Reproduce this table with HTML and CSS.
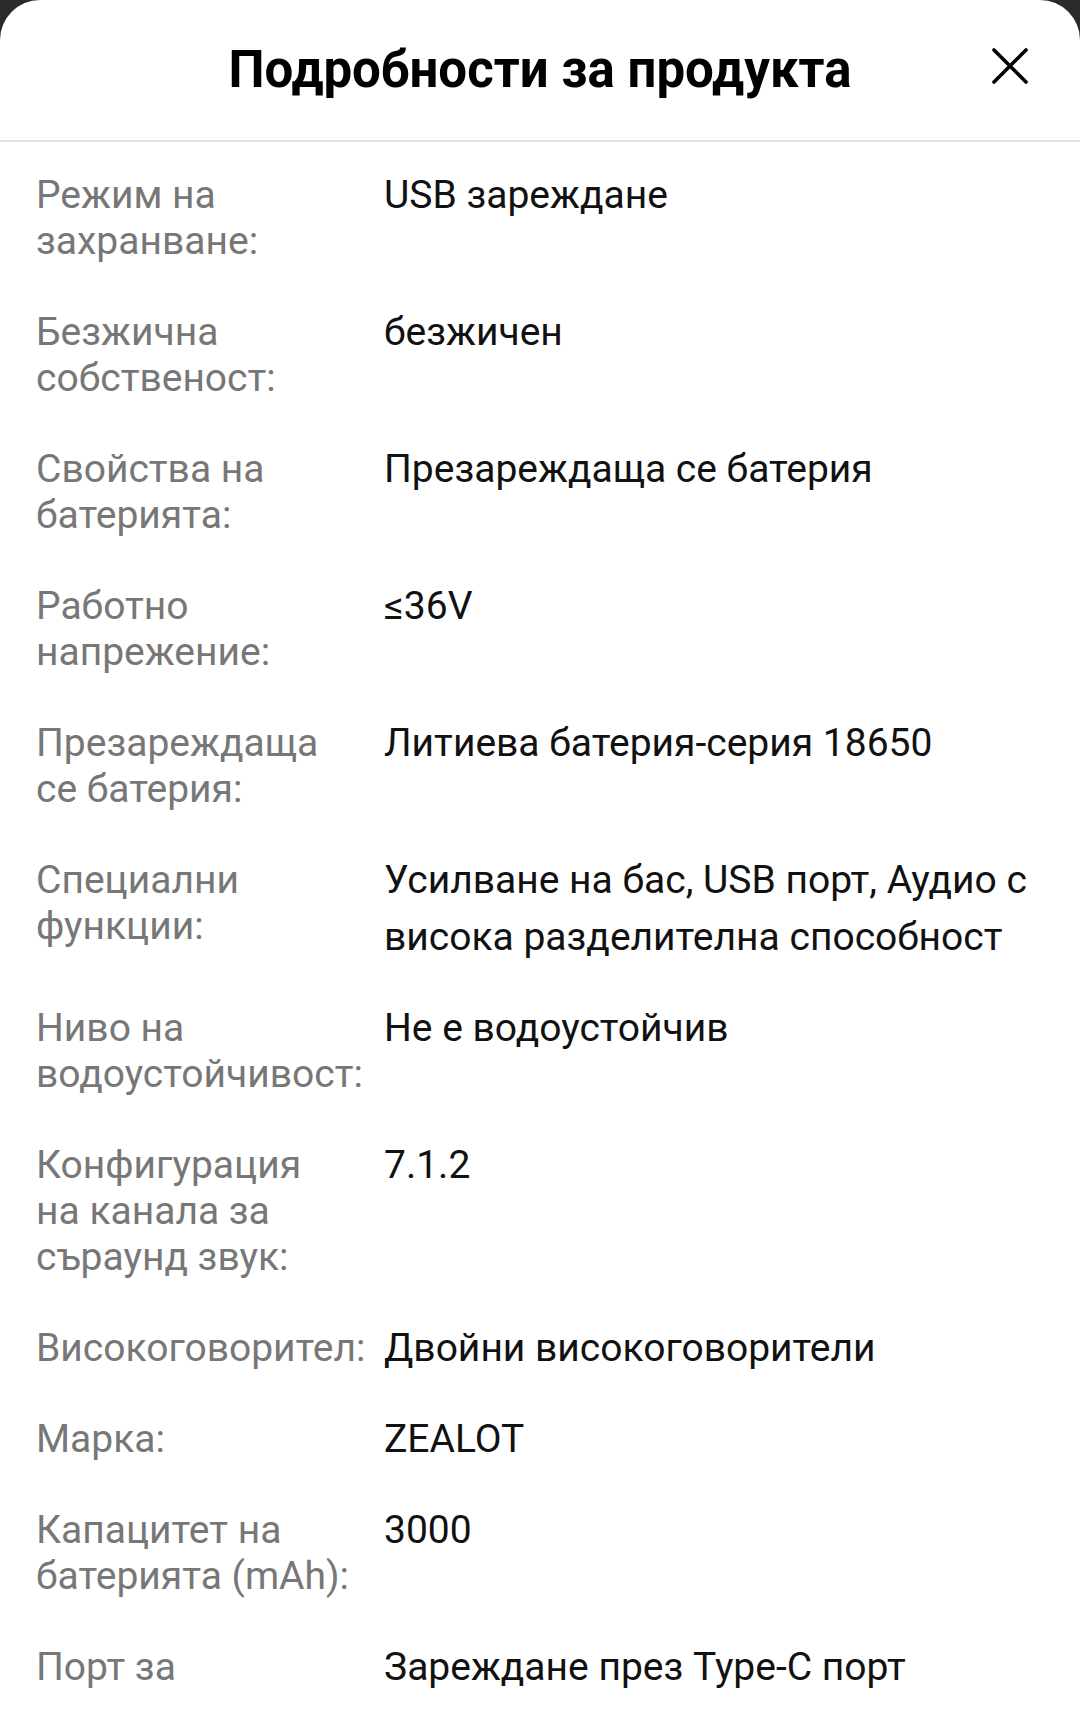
FILE: index.html
```html
<!DOCTYPE html>
<html lang="bg">
<head>
<meta charset="utf-8">
<title>Подробности за продукта</title>
<link rel="stylesheet" href="styles.css">
</head>
<body>
<div class="sheet">
  <header class="header">
    <span class="spacer"></span>
    <h1 class="title">Подробности за продукта</h1>
    <button class="close" aria-label="Затвори">
      <svg viewBox="0 0 36 36" width="36" height="36"><path d="M2 2 L34 34 M34 2 L2 34" stroke="#000" stroke-width="3.6" stroke-linecap="round" fill="none"/></svg>
    </button>
  </header>
  <dl class="specs">
    <div class="row"><dt class="label">Режим на захранване:</dt><dd class="value">USB зареждане</dd></div>
    <div class="row"><dt class="label">Безжична собственост:</dt><dd class="value">безжичен</dd></div>
    <div class="row"><dt class="label">Свойства на батерията:</dt><dd class="value">Презареждаща се батерия</dd></div>
    <div class="row"><dt class="label">Работно напрежение:</dt><dd class="value">≤36V</dd></div>
    <div class="row"><dt class="label">Презареждаща се батерия:</dt><dd class="value">Литиева батерия-серия 18650</dd></div>
    <div class="row"><dt class="label">Специални функции:</dt><dd class="value">Усилване на бас, USB порт, Аудио с висока разделителна способност</dd></div>
    <div class="row"><dt class="label">Ниво на водоустойчивост:</dt><dd class="value">Не е водоустойчив</dd></div>
    <div class="row"><dt class="label">Конфигурация на канала за съраунд звук:</dt><dd class="value">7.1.2</dd></div>
    <div class="row"><dt class="label">Високоговорител:</dt><dd class="value">Двойни високоговорители</dd></div>
    <div class="row"><dt class="label">Марка:</dt><dd class="value">ZEALOT</dd></div>
    <div class="row"><dt class="label">Капацитет на батерията (mAh):</dt><dd class="value">3000</dd></div>
    <div class="row"><dt class="label">Порт за</dt><dd class="value">Зареждане през Type-C порт</dd></div>
  </dl>
</div>
</body>
</html>
```
FILE: styles.css
```css
* { box-sizing: border-box; }
html, body {
  margin: 0;
  padding: 0;
  background: #2a2a2a;
}
body {
  font-family: Roboto, "Noto Sans", "Liberation Sans", sans-serif;
  height: 1730px;
  overflow: hidden;
}
.sheet {
  background: #fff;
  border-radius: 40px 40px 0 0;
  min-height: 1730px;
}
.header {
  height: 142px;
  display: grid;
  grid-template-columns: 1fr auto 1fr;
  align-items: center;
  border-bottom: 2px solid #e3e3e3;
}
.title {
  margin: 0;
  font-size: 51px;
  font-weight: 700;
  color: #000;
  line-height: 60px;
}
.close {
  justify-self: end;
  margin-right: 52px;
  margin-bottom: 8px;
  padding: 0;
  border: 0;
  background: none;
  width: 36px;
  height: 36px;
  display: flex;
}
.specs {
  margin: 0;
  padding: 30px 36px 0 36px;
  display: flex;
  flex-direction: column;
  gap: 45px;
}
.row {
  display: grid;
  grid-template-columns: 348px 1fr;
  align-items: start;
}
.label {
  margin: 0;
  padding-right: 33px;
  font-size: 39px;
  line-height: 46px;
  color: #777;
}
.value {
  margin: -5.5px 0;
  font-size: 39px;
  line-height: 57px;
  color: #111;
}
```
